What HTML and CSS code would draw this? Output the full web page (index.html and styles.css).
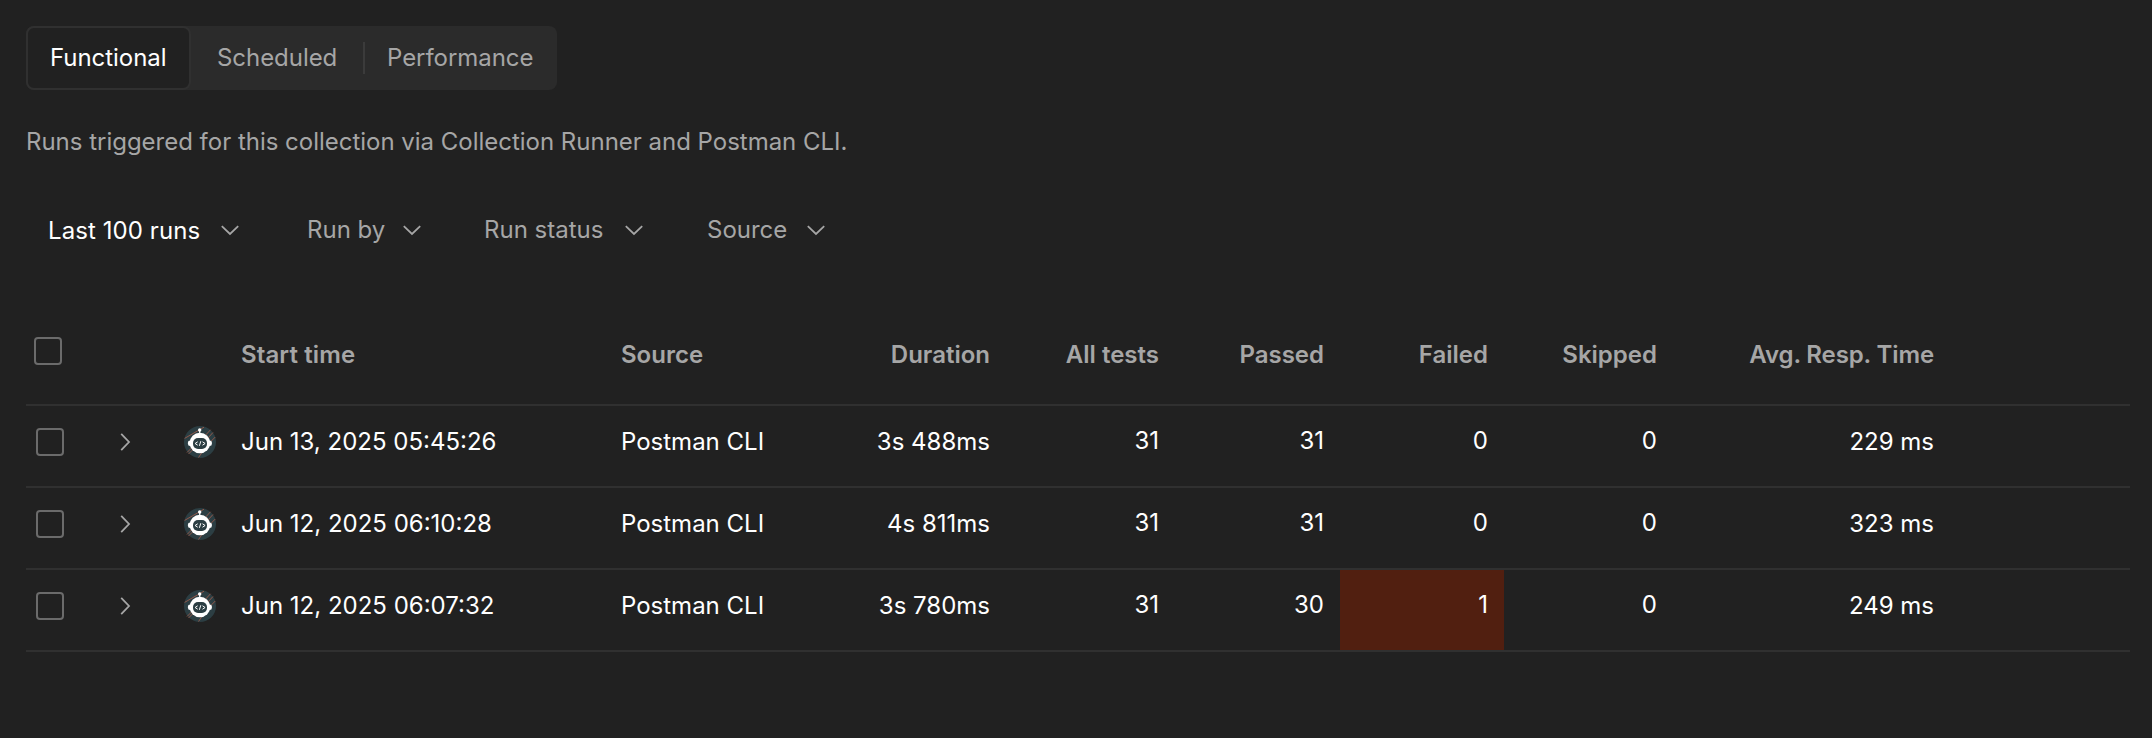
FILE: index.html
```html
<!DOCTYPE html>
<html lang="en">
<head>
<meta charset="utf-8">
<title>Collection runs</title>
<link rel="stylesheet" href="styles.css">
</head>
<body>
<svg class="sprite" aria-hidden="true">
  <symbol id="chevron-down" viewBox="0 0 24 24"><path d="M3.800 8.200 12 16l8.200-7.800" fill="none" stroke="currentColor" stroke-width="1.800"/></symbol>
  <symbol id="chevron-right" viewBox="0 0 24 24"><path d="M8.200 3.800 16 12l-7.800 8.200" fill="none" stroke="currentColor" stroke-width="1.800"/></symbol>
  <symbol id="robot" viewBox="0 0 32 32">
    <circle cx="16" cy="16" r="16" fill="#2c3e43"/>
    <path d="M.6 12.400 20 1.200M26.500 3.800l-6 6.500M29 6.500l-6 6.500M31.300 11l-4.500 4.500M3 26.500l5-5M4.500 28l5-5M14.500 31.500l3.500-5" stroke="#a9604c" stroke-width=".8" fill="none"/>
    <path d="M15.700 4v5" stroke="#fff" stroke-width="1.200"/>
    <circle cx="15.700" cy="4" r="1.700" fill="#fff"/>
    <rect x="3.900" y="14.500" width="24" height="5.500" rx="2.200" fill="#fff"/>
    <circle cx="15.900" cy="17" r="10.300" fill="#fff"/>
    <rect x="9" y="12" width="14" height="11" rx="5" fill="#2c3e43"/>
    <path d="M13.700 15.800l-2.600 1.700 2.600 1.700M18.500 15.800l2.600 1.700-2.600 1.700M16.800 15.200l-1.400 4.600" stroke="#fff" stroke-width="1" fill="none"/>
  </symbol>
</svg>
<main class="page">
  <nav class="tabs">
    <button class="tab tab-active">Functional</button>
    <button class="tab tab-scheduled">Scheduled</button>
    <span class="tab-divider"></span>
    <button class="tab tab-performance">Performance</button>
  </nav>
  <p class="description">Runs triggered for this collection via Collection Runner and Postman CLI.</p>
  <div class="filters">
    <button class="filter filter-range"><span>Last 100 runs</span><svg class="icon"><use href="#chevron-down"/></svg></button>
    <button class="filter filter-user"><span>Run by</span><svg class="icon"><use href="#chevron-down"/></svg></button>
    <button class="filter filter-status"><span>Run status</span><svg class="icon"><use href="#chevron-down"/></svg></button>
    <button class="filter"><span>Source</span><svg class="icon"><use href="#chevron-down"/></svg></button>
  </div>
  <table class="runs">
    <colgroup><col class="c-check"><col class="c-expand"><col class="c-avatar"><col class="c-start"><col class="c-source"><col class="c-duration"><col class="c-all"><col class="c-passed"><col class="c-failed"><col class="c-skipped"><col class="c-avg"><col></colgroup>
    <thead>
      <tr><th class="check"><span class="checkbox"></span></th><th></th><th></th><th class="start">Start time</th><th>Source</th><th class="num">Duration</th><th class="num">All tests</th><th class="num">Passed</th><th class="num">Failed</th><th class="num">Skipped</th><th class="num avg">Avg. Resp. Time</th><th></th></tr>
    </thead>
    <tbody>
      <tr><td class="check"><span class="checkbox"></span></td><td class="expand"><svg class="icon"><use href="#chevron-right"/></svg></td><td class="owner"><svg class="avatar"><use href="#robot"/></svg></td><td>Jun 13, 2025 05:45:26</td><td>Postman CLI</td><td class="num">3s 488ms</td><td class="num count">31</td><td class="num count">31</td><td class="num count">0</td><td class="num count">0</td><td class="num">229 ms</td><td></td></tr>
      <tr><td class="check"><span class="checkbox"></span></td><td class="expand"><svg class="icon"><use href="#chevron-right"/></svg></td><td class="owner"><svg class="avatar"><use href="#robot"/></svg></td><td>Jun 12, 2025 06:10:28</td><td>Postman CLI</td><td class="num">4s 811ms</td><td class="num count">31</td><td class="num count">31</td><td class="num count">0</td><td class="num count">0</td><td class="num">323 ms</td><td></td></tr>
      <tr><td class="check"><span class="checkbox"></span></td><td class="expand"><svg class="icon"><use href="#chevron-right"/></svg></td><td class="owner"><svg class="avatar"><use href="#robot"/></svg></td><td>Jun 12, 2025 06:07:32</td><td>Postman CLI</td><td class="num">3s 780ms</td><td class="num count">31</td><td class="num count">30</td><td class="num count has-failures">1</td><td class="num count">0</td><td class="num">249 ms</td><td></td></tr>
    </tbody>
  </table>
</main>
</body>
</html>
```
FILE: styles.css
```css
* { box-sizing: border-box; }
body {
  margin: 0;
  background: #212121;
  color: #fff;
  font: 400 24px/32px Inter, "Liberation Sans", sans-serif;
}
button {
  border: 0;
  padding: 0;
  background: none;
  color: #a6a6a6;
  font: inherit;
  white-space: nowrap;
}
.sprite { display: none; }
.page { padding: 26px 22px 0 26px; }
.icon { display: block; width: 24px; height: 24px; color: #a6a6a6; flex: none; }

.tabs {
  display: flex;
  align-items: center;
  width: 531px;
  height: 64px;
  border-radius: 8px;
  background: #2b2b2b;
}
.tab { text-align: left; height: 64px; padding-bottom: 1px; letter-spacing: -0.05px; }
.tab-active {
  width: 165px;
  padding-left: 22px;
  border: 2px solid #303030;
  border-radius: 8px;
  background: #212121;
  color: #fff;
}
.tab-scheduled { width: 172px; padding-left: 26px; }
.tab-divider { width: 2px; height: 32px; background: #3b3b3b; }
.tab-performance { padding-left: 22px; }

.description { margin: 0; padding-top: 36px; color: #a6a6a6; letter-spacing: -0.015px; }

.filters { display: flex; align-items: center; height: 32px; margin: 56px 0 0 22px; }
.filter { display: flex; align-items: center; justify-content: space-between; margin-right: 60px; }
.filter-range { width: 194px; margin-right: 65px; color: #fff; letter-spacing: 0.08px; }
.filter-range span { padding-top: 2px; }
.filter-user { width: 117px; }
.filter-status { width: 162px; margin-right: 61px; }
.filter:last-child { width: 121px; }

.runs {
  width: 100%;
  margin-top: 58px;
  table-layout: fixed;
  border-spacing: 0;
}
.c-check { width: 78px; }
.c-expand { width: 64px; }
.c-avatar { width: 57px; }
.c-start { width: 380px; }
.c-source { width: 239px; }
.c-duration { width: 162px; }
.c-all { width: 169px; }
.c-passed { width: 165px; }
.c-failed { width: 164px; }
.c-skipped { width: 169px; }
.c-avg { width: 277px; }
.runs th, .runs td {
  padding: 0 16px;
  border-bottom: 2px solid #303030;
  text-align: left;
  vertical-align: top;
  white-space: nowrap;
}
.runs th { height: 102px; padding-top: 35px; color: #a6a6a6; font-weight: 600; }
.runs td { height: 82px; padding-top: 20px; }
.runs th.start { letter-spacing: 0.12px; }
.runs th.avg { letter-spacing: -0.12px; }
.runs .num { text-align: right; }
.runs .count { padding-top: 19px; }
.runs th.check { padding: 33px 0 0 8px; }
.runs td.check { padding: 22px 0 0 10px; }
.runs .expand { padding: 24px 0 0 9px; }
.runs .owner { padding: 20px 0 0 16px; }
.checkbox { display: block; width: 28px; height: 28px; border: 2px solid #6b6b6b; border-radius: 4px; }
.avatar { display: block; width: 32px; height: 32px; }
.runs .has-failures { background: #511f10; }
```
